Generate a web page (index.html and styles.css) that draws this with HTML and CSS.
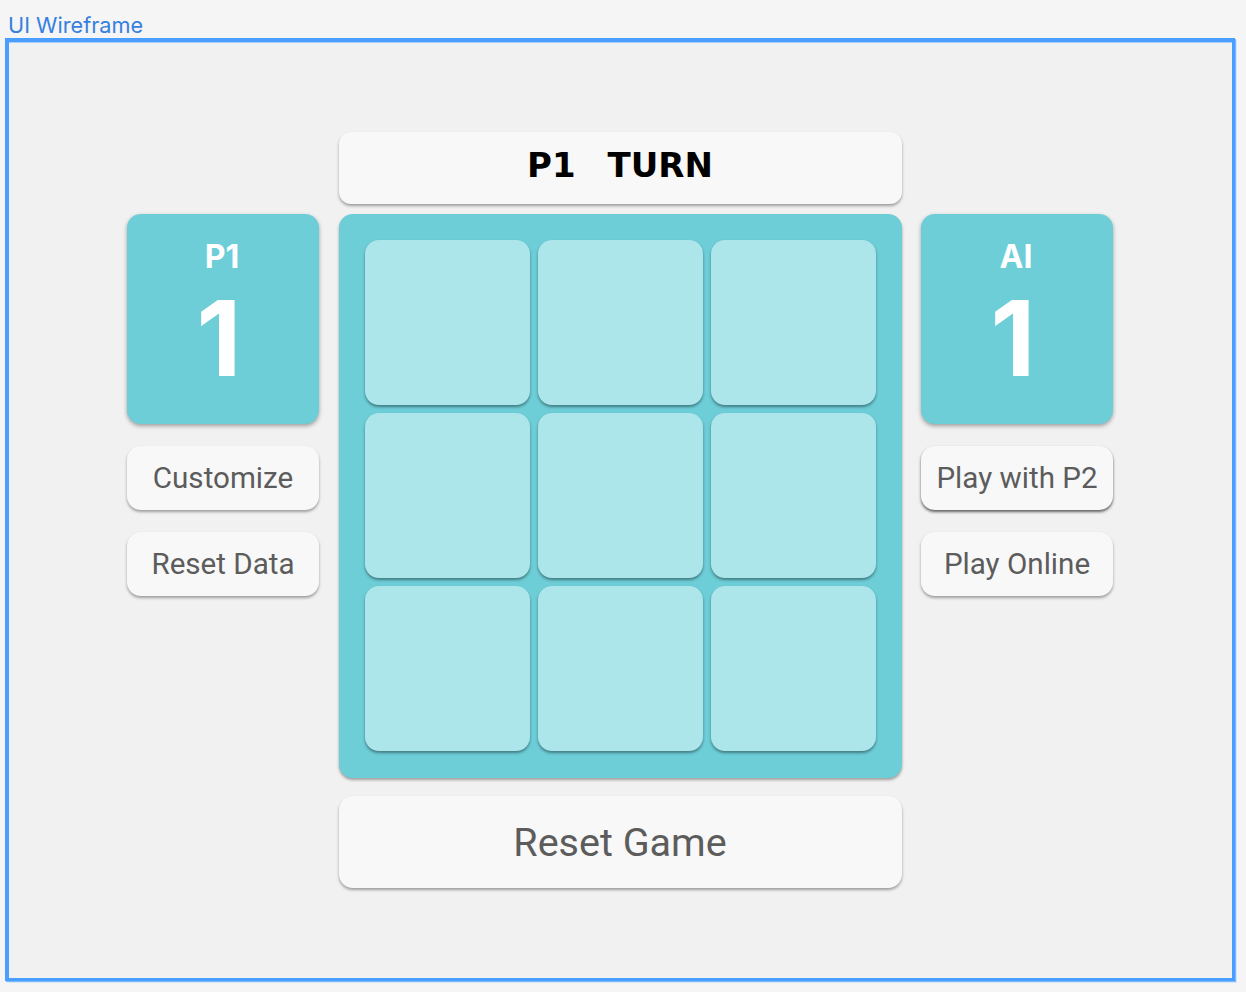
FILE: index.html
```html
<!DOCTYPE html>
<html lang="en">
<head>
    <meta charset="UTF-8">
    <title>UI Wireframe</title>
    <link rel="stylesheet" href="styles.css">
</head>
<body>
    <div class="frame-label">UI Wireframe</div>
    <div class="frame">
        <div class="game">
            <div class="turn">P1 TURN</div>

            <div class="side side-left">
                <div class="score">
                    <div class="score-name">P1</div>
                    <div class="score-value">1</div>
                </div>
                <button class="side-btn">Customize</button>
                <button class="side-btn">Reset Data</button>
            </div>

            <div class="board">
                <div class="cell"></div>
                <div class="cell"></div>
                <div class="cell"></div>
                <div class="cell"></div>
                <div class="cell"></div>
                <div class="cell"></div>
                <div class="cell"></div>
                <div class="cell"></div>
                <div class="cell"></div>
            </div>

            <div class="side side-right">
                <div class="score">
                    <div class="score-name">AI</div>
                    <div class="score-value">1</div>
                </div>
                <button class="side-btn side-btn-hover">Play with P2</button>
                <button class="side-btn">Play Online</button>
            </div>

            <button class="reset">Reset Game</button>
        </div>
    </div>
</body>
</html>
```

FILE: styles.css
```css
* {
    box-sizing: border-box;
}

body {
    margin: 0;
    height: 992px;
    padding: 13px 11px 11px 5px;
    background-color: #f5f5f5;
    font-family: Roboto, sans-serif;
    display: flex;
    flex-direction: column;
}

.frame-label {
    height: 25px;
    padding-left: 3px;
    font-family: Inter, sans-serif;
    font-size: 21.7px;
    line-height: 25px;
    color: #3580e0;
}

.frame {
    flex: 1;
    display: flex;
    justify-content: center;
    align-items: center;
    border-style: solid;
    border-color: #4a9eff;
    border-width: 4px 3px 3px 4px;
    background-color: #f1f1f1;
    box-shadow: 1px 1px 0 #7db9ff, 2px 2px 0 #d4e7ff, inset 0 1px 0 #a6cfff;
}

.game {
    display: grid;
    grid-template-columns: 192px 563px 192px;
    grid-template-rows: 72px 574px 110px;
    justify-content: space-between;
    width: 986px;
    margin-right: 1px;
}

.turn {
    grid-column: 2;
    grid-row: 1;
    display: flex;
    justify-content: center;
    align-items: center;
    padding-bottom: 6px;
    background-color: #f8f8f8;
    border-radius: 12px;
    box-shadow: 0 2px 3px rgba(0, 0, 0, 0.35);
    font-family: "DejaVu Sans", sans-serif;
    font-weight: bold;
    font-size: 34px;
    word-spacing: 20px;
    color: #000;
}

.side {
    grid-row: 2;
    margin-top: 10px;
    display: flex;
    flex-direction: column;
    gap: 22px;
}

.side-left {
    grid-column: 1;
}

.side-right {
    grid-column: 3;
}

.score {
    height: 210px;
    padding-top: 23px;
    background-color: #6dced8;
    border-radius: 14px;
    box-shadow: 0 2px 4px rgba(0, 0, 0, 0.35);
    color: #fff;
    text-align: center;
    font-family: Inter, sans-serif;
    font-weight: 700;
}

.score-name {
    font-size: 32px;
    line-height: 40px;
    padding-right: 2px;
}

.score-value {
    font-size: 104px;
    line-height: 112px;
    margin-top: 5px;
    padding-right: 8px;
}

button {
    border: none;
    padding: 0;
    cursor: pointer;
    font-family: Roboto, sans-serif;
    color: #5c5c5c;
    background-color: #f8f8f8;
    box-shadow: 0 2px 3px rgba(0, 0, 0, 0.35);
}

.side-btn {
    height: 64px;
    border-radius: 14px;
    font-size: 29.6px;
}

.side-btn-hover {
    box-shadow: 0 2px 3px rgba(0, 0, 0, 0.6);
}

.board {
    grid-column: 2;
    grid-row: 2;
    margin-top: 10px;
    height: 564px;
    padding: 26px;
    display: grid;
    grid-template-columns: repeat(3, 165px);
    grid-template-rows: repeat(3, 165px);
    gap: 8px;
    background-color: #6dced8;
    border-radius: 14px;
    box-shadow: 0 2px 3px rgba(0, 0, 0, 0.35);
}

.cell {
    background-color: #ace6ea;
    border-radius: 14px;
    box-shadow: 0 2px 3px rgba(0, 0, 0, 0.4);
}

.reset {
    grid-column: 2;
    grid-row: 3;
    margin-top: 18px;
    height: 92px;
    border-radius: 14px;
    font-size: 39.5px;
}
```
